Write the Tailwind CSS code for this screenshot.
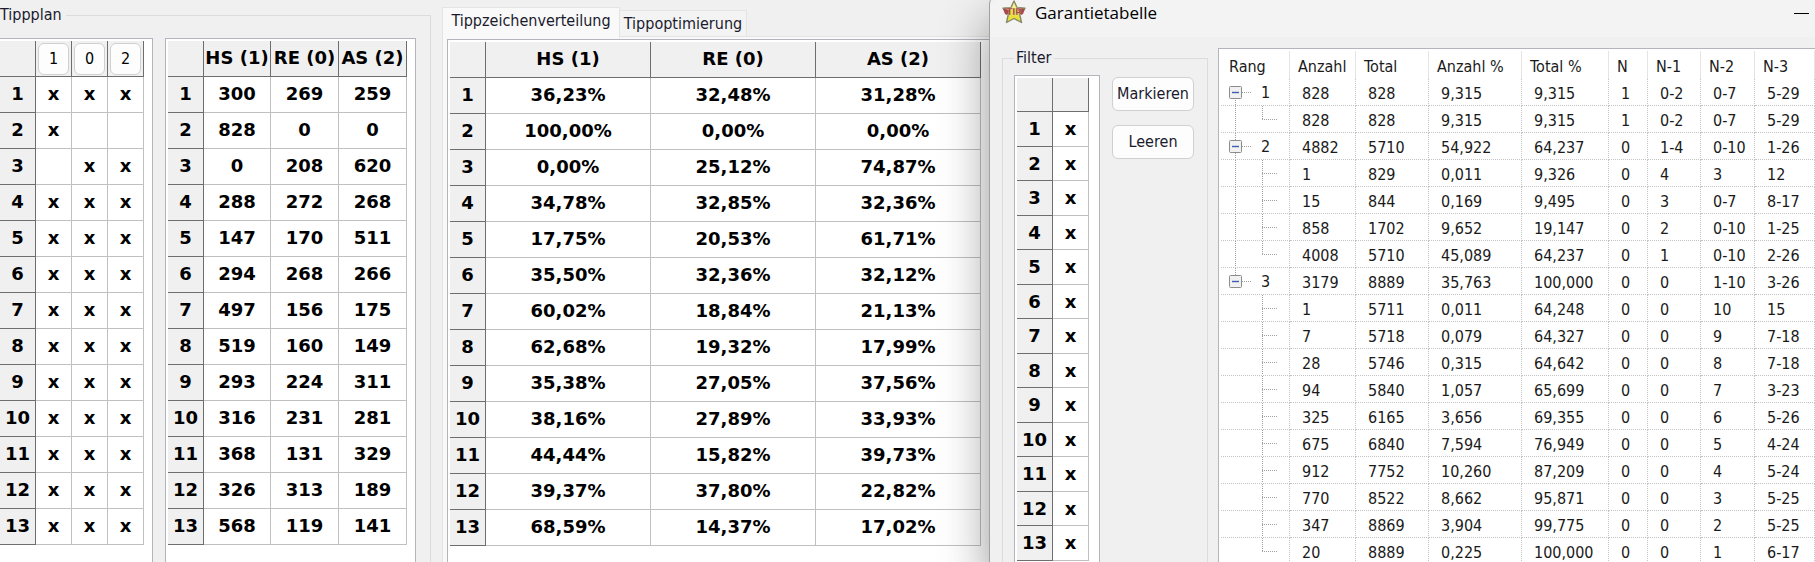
<!DOCTYPE html>
<html lang="de">
<head>
  <meta charset="UTF-8" />
  <meta name="viewport" content="width=device-width, initial-scale=1.0"/>
  <title>Garantietabelle</title>
  <script src="https://cdn.jsdelivr.net/npm/@tailwindcss/browser@4"></script>
</head>
<body class="bg-[#f0f0f0] text-black font-['DejaVu_Sans_Condensed','DejaVu_Sans',sans-serif] text-base leading-[22px]">
  <div class="flex h-screen overflow-hidden">

    <!-- Main window -->
    <main class="flex w-[990px] shrink-0">
      <fieldset class="mt-1 flex w-[431px] shrink-0 border-t border-r border-[#dcdcdc] pt-3">
        <legend class="pr-1 text-[#1a1a2e]">Tippplan</legend>
        <div class="flex h-full gap-3">
          <div class="w-[153px] border-t border-r border-[#b4b4bc] bg-white pt-[2px]">
            <table class="w-36 table-fixed border-separate border-spacing-0 text-center font-['DejaVu_Sans',sans-serif] text-[18px] leading-[22px] font-bold">
              <thead>
                <tr class="h-9">
                  <th class="border-r border-b border-[#6e6e6e] bg-[#f0f0f0]"></th>
                  <th class="border-r border-b border-[#6e6e6e] bg-[#f0f0f0] p-0"><button class="mx-auto block h-8 w-[31px] rounded-md border border-[#d0d0d0] bg-[#fdfdfd] font-['DejaVu_Sans_Condensed',sans-serif] text-base font-normal">1</button></th>
                  <th class="border-r border-b border-[#6e6e6e] bg-[#f0f0f0] p-0"><button class="mx-auto block h-8 w-[31px] rounded-md border border-[#d0d0d0] bg-[#fdfdfd] font-['DejaVu_Sans_Condensed',sans-serif] text-base font-normal">0</button></th>
                  <th class="border-r border-b border-[#6e6e6e] bg-[#f0f0f0] p-0"><button class="mx-auto block h-8 w-[31px] rounded-md border border-[#d0d0d0] bg-[#fdfdfd] font-['DejaVu_Sans_Condensed',sans-serif] text-base font-normal">2</button></th>
                </tr>
              </thead>
              <tbody id="plan"></tbody>
            </table>
          </div>
          <div class="w-[251px] border-x border-t border-[#b4b4bc] bg-white pt-[2px] pl-[2px]">
            <table class="w-[239px] table-fixed border-separate border-spacing-0 text-center font-['DejaVu_Sans',sans-serif] text-[18px] leading-[22px] font-bold">
              <colgroup><col class="w-9"><col class="w-[67px]"><col class="w-[68px]"><col class="w-[68px]"></colgroup>
              <thead>
                <tr class="h-9 whitespace-nowrap">
                  <th class="border-r border-b border-[#6e6e6e] bg-[#f0f0f0]"></th>
                  <th class="border-r border-b border-[#6e6e6e] bg-[#f0f0f0] p-0 pb-[2px]">HS (1)</th>
                  <th class="border-r border-b border-[#6e6e6e] bg-[#f0f0f0] p-0 pb-[2px]">RE (0)</th>
                  <th class="border-r border-b border-[#6e6e6e] bg-[#f0f0f0] p-0 pb-[2px]">AS (2)</th>
                </tr>
              </thead>
              <tbody id="counts"></tbody>
            </table>
          </div>
        </div>
      </fieldset>

      <section class="ml-[11px] flex flex-1 flex-col pt-[7px]">
        <div class="flex h-[29px] items-end text-[#1a1a2e]" role="tablist">
          <button role="tab" aria-selected="true" class="z-10 -mb-[2px] h-[31px] w-[178px] border-x border-t border-[#e4e4e4] bg-[#f9f9f9] pb-1">Tippzeichenverteilung</button>
          <button role="tab" aria-selected="false" class="h-[26px] w-[127px] border-t border-r border-[#e4e4e4] bg-[#f3f3f3]">Tippoptimierung</button>
        </div>
        <div class="flex-1 border-t border-l border-[#e4e4e4] bg-[#f9f9f9] pt-[2px] pl-1">
          <div class="h-full border-t border-l border-[#b4b4bc] bg-white pt-[2px] pl-[2px]">
            <table class="w-[531px] table-fixed border-separate border-spacing-0 text-center font-['DejaVu_Sans',sans-serif] text-[18px] leading-[22px] font-bold">
              <colgroup><col class="w-9"><col class="w-[165px]"><col class="w-[165px]"><col class="w-[165px]"></colgroup>
              <thead>
                <tr class="h-9">
                  <th class="border-r border-b border-[#6e6e6e] bg-[#f0f0f0]"></th>
                  <th class="border-r border-b border-[#6e6e6e] bg-[#f0f0f0] p-0 pb-[2px]">HS (1)</th>
                  <th class="border-r border-b border-[#6e6e6e] bg-[#f0f0f0] p-0 pb-[2px]">RE (0)</th>
                  <th class="border-r border-b border-[#6e6e6e] bg-[#f0f0f0] p-0 pb-[2px]">AS (2)</th>
                </tr>
              </thead>
              <tbody id="percents"></tbody>
            </table>
          </div>
        </div>
      </section>
    </main>

    <!-- Garantietabelle window -->
    <aside class="z-20 -mt-1 -ml-px flex min-w-0 flex-1 flex-col rounded-tl-lg border-l border-[#a0a0a0] bg-[#f0f0f0] pt-1 shadow-[0_24px_48px_rgba(0,0,0,0.42)]">
      <header class="flex h-[37px] shrink-0 items-start rounded-tl-lg bg-[#f3f3f3] pr-[6px] pl-3">
        <svg class="h-6 w-6" viewBox="0 0 24 24">
          <path d="M12 1l3 6.500 8 .8-5.500 5.200 2 9-7.500-4-7.500 4 2-9L1 8.300 9 7.500z" fill="#eae03a" stroke="#85876a" stroke-width="1.400" stroke-linejoin="round"/>
          <path d="M12 3l2 5h-4z" fill="#f6f3a4"/>
          <path d="M1 9l6-1 1 2-3 5-2-1zM23 9l-6-1-1 2 3 5 2-1z" fill="#a8484a"/>
          <text x="12" y="15" text-anchor="middle" font-family="DejaVu Sans Condensed" font-size="9" font-weight="bold" fill="#8e2f35" stroke="#e3d3b4" stroke-width="0.300">TIP</text>
        </svg>
        <h1 class="ml-[9px] flex-1 font-['Open_Sans','Noto_Sans',sans-serif] text-[17px] leading-[26px]">Garantietabelle</h1>
        <button aria-label="Minimieren" class="h-[26px] w-[15px]"><span class="block h-px bg-black"></span></button>
      </header>

      <div class="flex min-h-0 flex-1 gap-[10px] pl-3">
        <fieldset class="mt-[10px] w-[206px] shrink-0 border-x border-t border-[#dcdcdc] pt-[6px] pl-[11px]">
          <legend class="px-[2px] text-[#1a1a2e]">Filter</legend>
          <div class="flex h-full gap-3">
            <div class="w-[86px] border-x border-t border-[#b4b4bc] bg-white pt-[2px] pl-[2px]">
              <table class="w-[72px] table-fixed border-separate border-spacing-0 text-center font-['DejaVu_Sans',sans-serif] text-[18px] leading-[22px] font-bold">
                <thead>
                  <tr class="h-[34px]">
                    <th class="border-r border-b border-[#6e6e6e] bg-[#f0f0f0]"></th>
                    <th class="border-r border-b border-[#6e6e6e] bg-[#f0f0f0]"></th>
                  </tr>
                </thead>
                <tbody id="filter"></tbody>
              </table>
            </div>
            <div class="flex flex-col gap-[14px] pt-[2px] text-[#1a1a2e]">
              <button class="h-[34px] w-[82px] rounded-md border border-[#d0d0d0] bg-[#fdfdfd]">Markieren</button>
              <button class="h-[34px] w-[82px] rounded-md border border-[#d0d0d0] bg-[#fdfdfd]">Leeren</button>
            </div>
          </div>
        </fieldset>

        <div class="mt-[11px] min-w-0 flex-1 overflow-hidden border-t border-l border-[#b4b4bc] bg-white pt-[2px] pl-[2px]">
          <table class="w-full table-fixed border-separate border-spacing-0 text-left text-[#1a1a1a]">
            <colgroup><col class="w-[69px]"><col class="w-[66px]"><col class="w-[73px]"><col class="w-[93px]"><col class="w-[87px]"><col class="w-[39px]"><col class="w-[53px]"><col class="w-[54px]"><col></colgroup>
            <thead>
              <tr class="h-7 whitespace-nowrap *:border-r *:border-[#e4e4e4] *:p-0 *:pt-1 *:pl-2 *:font-normal">
                <th>Rang</th><th>Anzahl</th><th>Total</th><th>Anzahl %</th><th>Total %</th><th>N</th><th>N-1</th><th>N-2</th><th>N-3</th>
              </tr>
            </thead>
            <tbody id="ranks"></tbody>
          </table>
        </div>
      </div>
    </aside>
  </div>

  <script>
    const plan = ["x x x", "x - -", "- x x", "x x x", "x x x", "x x x", "x x x", "x x x", "x x x", "x x x", "x x x", "x x x", "x x x"];
    const counts = ["300 269 259", "828 0 0", "0 208 620", "288 272 268", "147 170 511", "294 268 266", "497 156 175", "519 160 149", "293 224 311", "316 231 281", "368 131 329", "326 313 189", "568 119 141"];
    const percents = [
      "36,23% 32,48% 31,28%", "100,00% 0,00% 0,00%", "0,00% 25,12% 74,87%", "34,78% 32,85% 32,36%", "17,75% 20,53% 61,71%",
      "35,50% 32,36% 32,12%", "60,02% 18,84% 21,13%", "62,68% 19,32% 17,99%", "35,38% 27,05% 37,56%", "38,16% 27,89% 33,93%",
      "44,44% 15,82% 39,73%", "39,37% 37,80% 22,82%", "68,59% 14,37% 17,02%"
    ];
    const filter = Array(13).fill("x");

    function fillGrid(id, rows, rowClass) {
      document.getElementById(id).innerHTML = rows.map((row, i) => `
        <tr class="${rowClass}">
          <th class="border-r border-b border-[#6e6e6e] bg-[#f0f0f0] p-0">${i + 1}</th>
          ${row.split(" ").map((v) => `<td class="border-r border-b border-[#c0c0c0] p-0">${v === "-" ? "" : v}</td>`).join("")}
        </tr>`).join("");
    }

    fillGrid("plan", plan, "h-9 *:pb-px");
    fillGrid("counts", counts, "h-9 *:pb-px");
    fillGrid("percents", percents, "h-9 *:pb-px");
    fillGrid("filter", filter, "odd:h-[35px] even:h-[34px]");

    // first value: rank number, "+" for a child, "." for the last child of a rank
    const ranks = [
      "1 828 828 9,315 9,315 1 0-2 0-7 5-29",
      ". 828 828 9,315 9,315 1 0-2 0-7 5-29",
      "2 4882 5710 54,922 64,237 0 1-4 0-10 1-26",
      "+ 1 829 0,011 9,326 0 4 3 12",
      "+ 15 844 0,169 9,495 0 3 0-7 8-17",
      "+ 858 1702 9,652 19,147 0 2 0-10 1-25",
      ". 4008 5710 45,089 64,237 0 1 0-10 2-26",
      "3 3179 8889 35,763 100,000 0 0 1-10 3-26",
      "+ 1 5711 0,011 64,248 0 0 10 15",
      "+ 7 5718 0,079 64,327 0 0 9 7-18",
      "+ 28 5746 0,315 64,642 0 0 8 7-18",
      "+ 94 5840 1,057 65,699 0 0 7 3-23",
      "+ 325 6165 3,656 69,355 0 0 6 5-26",
      "+ 675 6840 7,594 76,949 0 0 5 4-24",
      "+ 912 7752 10,260 87,209 0 0 4 5-24",
      "+ 770 8522 8,662 95,871 0 0 3 5-25",
      "+ 347 8869 3,904 99,775 0 0 2 5-25",
      ". 20 8889 0,225 100,000 0 0 1 6-17"
    ];
    const lastRank = ranks.findIndex((r) => r.startsWith("3"));

    // tree lines and the expand box of one row
    function treeCell(kind, i) {
      const isRank = kind !== "+" && kind !== ".";
      let lines = "";
      if (i > 0 && i <= lastRank) lines += `M14.5 0V${i === lastRank ? 7 : 27}`;
      if (i === 0) lines += "M14.5 19V27";
      lines += isRank ? "M21 13.5H30" : `M41.5 0V${kind === "." ? 13 : 27}M41 13.5H56`;
      const box = isRank ? `
        <rect x="8.500" y="7.500" width="12" height="12" rx="1" fill="#f1f1f1" stroke="#8c8c8c"/>
        <path d="M11 13.500h7" stroke="#3c5fb4" stroke-width="1.400"/>` : "";
      return `<div class="flex items-center">
        <svg class="h-[26px] ${isRank ? "w-10" : "w-14"}" viewBox="0 0 ${isRank ? 40 : 56} 26"><path d="${lines}" fill="none" stroke="#a0a0a0" stroke-dasharray="1 1"/>${box}</svg>
        ${isRank ? `<span class="pt-[2px]">${kind}</span>` : ""}
      </div>`;
    }

    document.getElementById("ranks").innerHTML = ranks.map((row, i) => {
      const [kind, ...values] = row.split(" ");
      return `<tr class="h-[27px]">
        <td class="border-r border-b border-dotted border-[#c4c4c4] p-0">${treeCell(kind, i)}</td>
        ${values.map((v) => `<td class="border-r border-b border-dotted border-[#c4c4c4] p-0 pt-[3px] pl-3">${v}</td>`).join("")}
      </tr>`;
    }).join("");
  </script>
</body>
</html>
